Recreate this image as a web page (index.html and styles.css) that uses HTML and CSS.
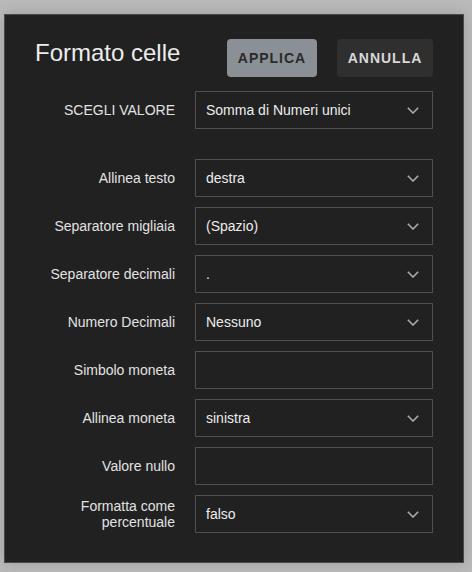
FILE: index.html
```html
<!DOCTYPE html>
<html lang="it">
<head>
    <meta charset="UTF-8">
    <meta name="viewport" content="width=device-width, initial-scale=1.0">
    <title>Formato celle</title>
    <link rel="stylesheet" href="styles.css">
</head>
<body>
    <div class="dialog">
        <div class="header">
            <div class="title">Formato celle</div>
            <div class="actions">
                <button class="btn btn-apply">APPLICA</button>
                <button class="btn btn-cancel">ANNULLA</button>
            </div>
        </div>

        <div class="form">
            <div class="row row-first">
                <div class="label">SCEGLI VALORE</div>
                <div class="field select">Somma di Numeri unici<svg class="chev" width="12" height="7" viewBox="0 0 12 7"><polyline points="0.8,0.8 6,6 11.2,0.8"/></svg></div>
            </div>
            <div class="row">
                <div class="label">Allinea testo</div>
                <div class="field select">destra<svg class="chev" width="12" height="7" viewBox="0 0 12 7"><polyline points="0.8,0.8 6,6 11.2,0.8"/></svg></div>
            </div>
            <div class="row">
                <div class="label">Separatore migliaia</div>
                <div class="field select">(Spazio)<svg class="chev" width="12" height="7" viewBox="0 0 12 7"><polyline points="0.8,0.8 6,6 11.2,0.8"/></svg></div>
            </div>
            <div class="row">
                <div class="label">Separatore decimali</div>
                <div class="field select">.<svg class="chev" width="12" height="7" viewBox="0 0 12 7"><polyline points="0.8,0.8 6,6 11.2,0.8"/></svg></div>
            </div>
            <div class="row">
                <div class="label">Numero Decimali</div>
                <div class="field select">Nessuno<svg class="chev" width="12" height="7" viewBox="0 0 12 7"><polyline points="0.8,0.8 6,6 11.2,0.8"/></svg></div>
            </div>
            <div class="row">
                <div class="label">Simbolo moneta</div>
                <div class="field"></div>
            </div>
            <div class="row">
                <div class="label">Allinea moneta</div>
                <div class="field select">sinistra<svg class="chev" width="12" height="7" viewBox="0 0 12 7"><polyline points="0.8,0.8 6,6 11.2,0.8"/></svg></div>
            </div>
            <div class="row">
                <div class="label">Valore nullo</div>
                <div class="field"></div>
            </div>
            <div class="row">
                <div class="label">Formatta come<br>percentuale</div>
                <div class="field select">falso<svg class="chev" width="12" height="7" viewBox="0 0 12 7"><polyline points="0.8,0.8 6,6 11.2,0.8"/></svg></div>
            </div>
        </div>
    </div>
</body>
</html>
```

FILE: styles.css
```css
body {
    font-family: 'Liberation Sans', Arial, sans-serif;
    background-color: #b9b9b9;
    margin: 0;
    padding: 14px 0 0 4px;
    min-height: 572px;
    box-sizing: border-box;
}

.dialog {
    width: 460px;
    height: 549px;
    box-sizing: border-box;
    background-color: #212121;
    border: 1px solid #4a4a4a;
    box-shadow: 0 0 12px rgba(0, 0, 0, 0.15);
    padding: 24px 30px 30px 30px;
}

.header {
    display: flex;
    justify-content: space-between;
    align-items: center;
    height: 38px;
}

.title {
    color: #ececec;
    font-size: 24px;
    margin-top: -10px;
}

.actions {
    display: flex;
    gap: 20px;
}

.btn {
    height: 38px;
    border: none;
    border-radius: 4px;
    font-family: 'Liberation Sans', Arial, sans-serif;
    font-size: 14px;
    font-weight: bold;
    letter-spacing: 1px;
    padding: 0;
    cursor: pointer;
}

.btn-apply {
    width: 90px;
    background-color: #8a9096;
    color: #2a2a2a;
}

.btn-cancel {
    width: 96px;
    background-color: #2f2f2f;
    color: #d8d8d8;
}

.form {
    margin-top: 14px;
    display: flex;
    flex-direction: column;
    gap: 10px;
}

.row {
    display: grid;
    grid-template-columns: 140px 238px;
    column-gap: 20px;
    align-items: center;
}

.row-first {
    margin-bottom: 20px;
}

.label {
    text-align: right;
    color: #e2e2e2;
    font-size: 14px;
    line-height: 16px;
}

.field {
    height: 38px;
    box-sizing: border-box;
    border: 1px solid #4f4f4f;
    padding: 0 13px 0 10px;
    color: #ececec;
    font-size: 14px;
    display: flex;
    align-items: center;
    justify-content: space-between;
}

.chev polyline {
    fill: none;
    stroke: #b0b0b0;
    stroke-width: 1.5;
}
```
